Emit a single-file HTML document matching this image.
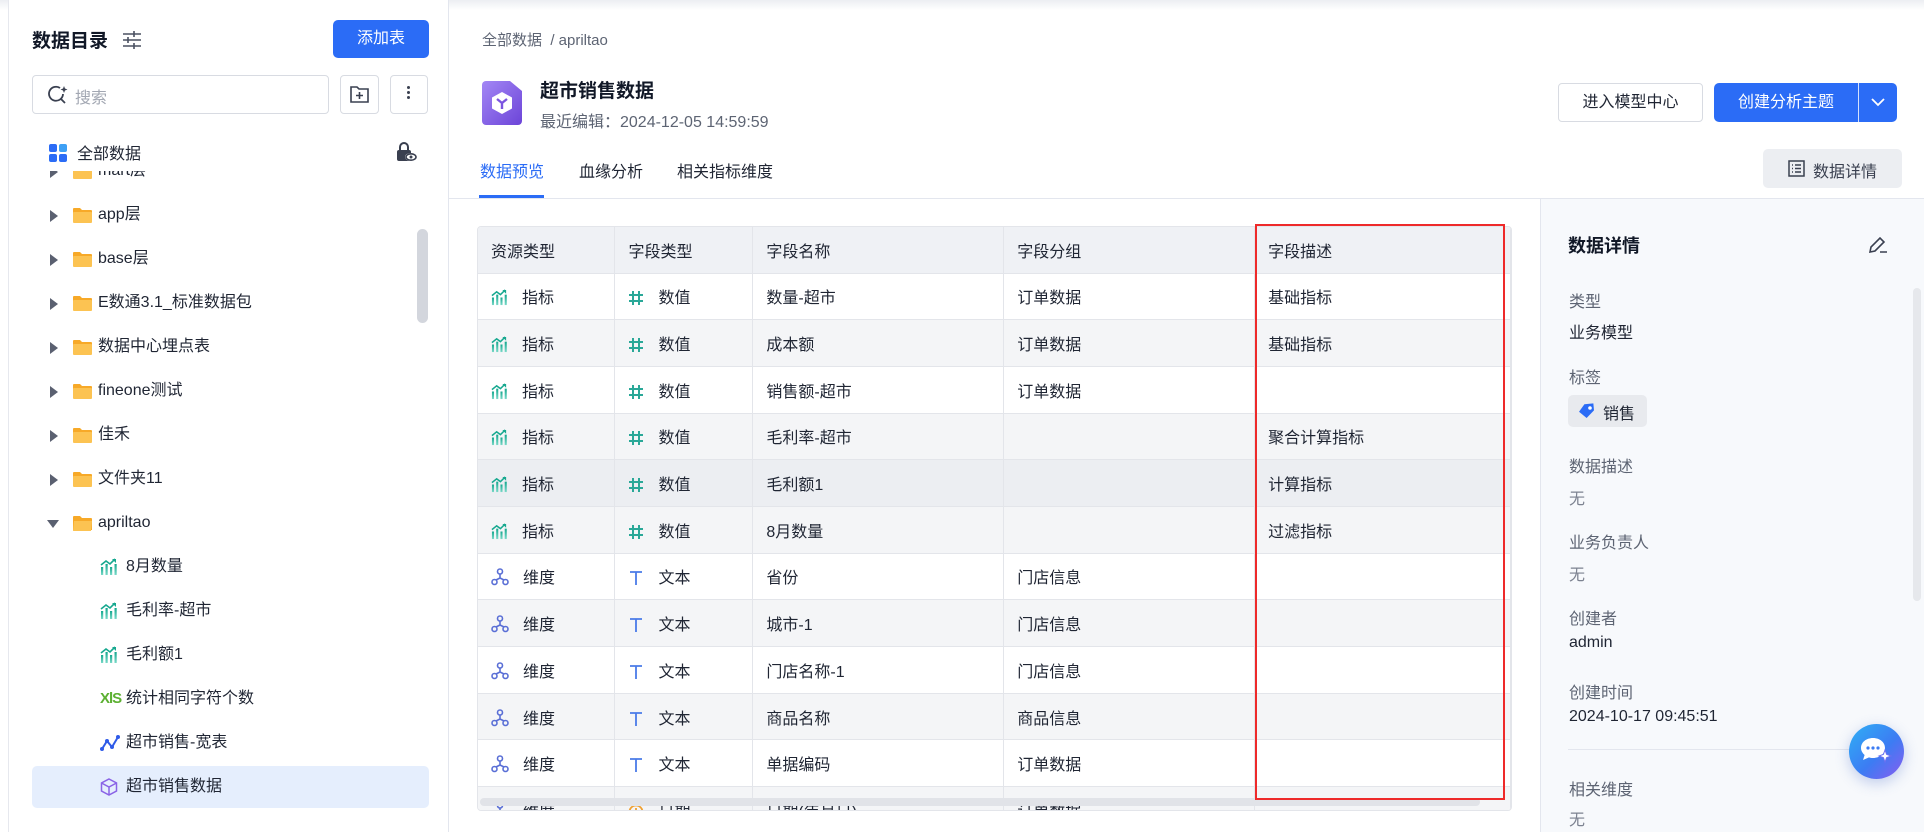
<!DOCTYPE html>
<html><head><meta charset="utf-8">
<style>
*{box-sizing:border-box;margin:0;padding:0}
body{width:1924px;height:832px;overflow:hidden;background:#fff;font-family:"Liberation Sans","Noto Sans CJK SC",sans-serif;color:#1f2533;font-size:16px;position:relative}
.a{position:absolute;white-space:nowrap}
.topsh{position:absolute;left:0;top:0;width:1924px;height:10px;background:linear-gradient(#eceef2,#fff)}
.side{position:absolute;left:8px;top:0;width:441px;height:832px;border-left:1px solid #e6e8ee;border-right:1px solid #e3e6ee;background:#fff}
.btn{position:absolute;border:1px solid #d8dbe2;border-radius:4px;background:#fff}
.row{position:absolute;left:0;width:440px;height:44px;line-height:44px}
.tri{position:absolute;left:41px;top:17px;width:0;height:0;border-top:6px solid transparent;border-bottom:6px solid transparent;border-left:8px solid #5a6070}
.tri.d{left:38px;top:19px;border-left:6px solid transparent;border-right:6px solid transparent;border-top:8px solid #5a6070;border-bottom:0}
.fold{position:absolute;left:64px;top:14px;width:19px;height:16px}
.tx{position:absolute;left:89px;top:0;font-size:16px;color:#1f2533}
.ci{position:absolute;left:91px;top:13px}
.ct{position:absolute;left:117px;font-size:16px}
table{border-collapse:collapse;position:absolute;left:478px;top:227px;width:1033px}
td{height:46.7px;border-right:1px solid #e3e5ea;border-bottom:1px solid #e3e5ea;font-size:16px;padding-left:13px;white-space:nowrap;overflow:hidden}
tr.h td{background:#eff1f5;height:46px}
tr.g td{background:#f4f5f7}
tr.hv td{background:#eceef2}
td svg{vertical-align:-3px;margin-right:14px}
.lab{position:absolute;left:1569px;font-size:16px;color:#5d6473}
.val{position:absolute;left:1569px;font-size:16px;color:#1f2533}
</style></head><body>
<div class="topsh"></div>
<div class="side">
  <div class="a" style="left:23px;top:26px;font-size:19px;font-weight:bold;color:#111827">数据目录</div>
  <svg class="a" style="left:113px;top:30px" width="20" height="20" viewBox="0 0 20 20" fill="none" stroke="#4a5060" stroke-width="1.6"><path d="M1 4h18M1 10h18M1 16h18"/><path d="M12 1v6M6 7v6M12 13v6"/></svg>
  <div class="a" style="left:324px;top:20px;width:96px;height:38px;background:#2b6cf6;border-radius:5px;color:#fff;font-size:16px;line-height:38px;text-align:center">添加表</div>
  <div class="btn" style="left:23px;top:75px;width:297px;height:39px"></div>
  <svg class="a" style="left:39px;top:85px" width="21" height="20" viewBox="0 0 21 20" fill="none" stroke="#3a4050" stroke-width="1.8"><path d="M15 9a7 7 0 1 1-3-6"/><path d="M13 14l4 4"/><path d="M16 1l1 2.5 2.5 1-2.5 1-1 2.5-1-2.5-2.5-1 2.5-1z" fill="#3a4050" stroke="none"/></svg>
  <div class="a" style="left:66px;top:84px;color:#a2a7b2;font-size:16px">搜索</div>
  <div class="btn" style="left:331px;top:75px;width:39px;height:39px"></div>
  <svg class="a" style="left:341px;top:85px" width="19" height="18" viewBox="0 0 19 18" fill="none" stroke="#3a4050" stroke-width="1.6"><path d="M1 2h6l2 2h9v13H1z"/><path d="M9.5 7v7M6 10.5h7"/></svg>
  <div class="btn" style="left:381px;top:75px;width:38px;height:39px"></div>
  <div class="a" style="left:398px;top:86px;width:3px;height:3px;background:#3a4050;border-radius:2px;box-shadow:0 5px 0 #3a4050,0 10px 0 #3a4050"></div>
  <div class="a" style="left:40px;top:144px;width:8px;height:8px;background:#2b6cf6;border-radius:2px;box-shadow:10px 0 0 #3ea0f5,0 10px 0 #2b6cf6,10px 10px 0 #2b6cf6"></div>
  <div class="a" style="left:68px;top:140px;font-size:16px">全部数据</div>
  <svg class="a" style="left:387px;top:142px" width="22" height="20" viewBox="0 0 22 20"><path d="M4 8V5a4 4 0 0 1 8 0v3" fill="none" stroke="#3a4050" stroke-width="2"/><rect x="1" y="8" width="14" height="11" rx="2" fill="#3a4050"/><ellipse cx="15" cy="15" rx="6" ry="4" fill="#fff"/><ellipse cx="15" cy="15" rx="5" ry="3.2" fill="none" stroke="#3a4050" stroke-width="1.6"/><circle cx="15" cy="15" r="1.5" fill="#3a4050"/></svg>
  <div style="position:absolute;left:0;top:171px;width:440px;height:641px;overflow:hidden">
    <div class="row" style="top:-22px"><div class="tri"></div><svg class="fold" viewBox="0 0 19 16"><path d="M0 2a1 1 0 0 1 1-1h6l2 2h9a1 1 0 0 1 1 1v11H0z" fill="#f7a928"/><rect x="0" y="5" width="19" height="11" rx="1" fill="#fcc352"/></svg><div class="tx">mart层</div></div>
    <div class="row" style="top:22px"><div class="tri"></div><svg class="fold" viewBox="0 0 19 16"><path d="M0 2a1 1 0 0 1 1-1h6l2 2h9a1 1 0 0 1 1 1v11H0z" fill="#f7a928"/><rect x="0" y="5" width="19" height="11" rx="1" fill="#fcc352"/></svg><div class="tx">app层</div></div>
    <div class="row" style="top:66px"><div class="tri"></div><svg class="fold" viewBox="0 0 19 16"><path d="M0 2a1 1 0 0 1 1-1h6l2 2h9a1 1 0 0 1 1 1v11H0z" fill="#f7a928"/><rect x="0" y="5" width="19" height="11" rx="1" fill="#fcc352"/></svg><div class="tx">base层</div></div>
    <div class="row" style="top:110px"><div class="tri"></div><svg class="fold" viewBox="0 0 19 16"><path d="M0 2a1 1 0 0 1 1-1h6l2 2h9a1 1 0 0 1 1 1v11H0z" fill="#f7a928"/><rect x="0" y="5" width="19" height="11" rx="1" fill="#fcc352"/></svg><div class="tx">E数通3.1_标准数据包</div></div>
    <div class="row" style="top:154px"><div class="tri"></div><svg class="fold" viewBox="0 0 19 16"><path d="M0 2a1 1 0 0 1 1-1h6l2 2h9a1 1 0 0 1 1 1v11H0z" fill="#f7a928"/><rect x="0" y="5" width="19" height="11" rx="1" fill="#fcc352"/></svg><div class="tx">数据中心埋点表</div></div>
    <div class="row" style="top:198px"><div class="tri"></div><svg class="fold" viewBox="0 0 19 16"><path d="M0 2a1 1 0 0 1 1-1h6l2 2h9a1 1 0 0 1 1 1v11H0z" fill="#f7a928"/><rect x="0" y="5" width="19" height="11" rx="1" fill="#fcc352"/></svg><div class="tx">fineone测试</div></div>
    <div class="row" style="top:242px"><div class="tri"></div><svg class="fold" viewBox="0 0 19 16"><path d="M0 2a1 1 0 0 1 1-1h6l2 2h9a1 1 0 0 1 1 1v11H0z" fill="#f7a928"/><rect x="0" y="5" width="19" height="11" rx="1" fill="#fcc352"/></svg><div class="tx">佳禾</div></div>
    <div class="row" style="top:286px"><div class="tri"></div><svg class="fold" viewBox="0 0 19 16"><path d="M0 2a1 1 0 0 1 1-1h6l2 2h9a1 1 0 0 1 1 1v11H0z" fill="#f7a928"/><rect x="0" y="5" width="19" height="11" rx="1" fill="#fcc352"/></svg><div class="tx">文件夹11</div></div>
    <div class="row" style="top:330px"><div class="tri d"></div><svg class="fold" viewBox="0 0 19 16"><path d="M0 2a1 1 0 0 1 1-1h6l2 2h9a1 1 0 0 1 1 1v11H0z" fill="#f7a928"/><path d="M1 6h18l-1 10H0z" fill="#fcc352"/></svg><div class="tx">apriltao</div></div>
    <div class="row" style="top:374px"><svg class="ci" width="18" height="18" viewBox="0 0 18 18"><defs><linearGradient id="tg" x1="0" y1="1" x2="0" y2="0"><stop offset="0" stop-color="#7ad9c8"/><stop offset="1" stop-color="#16a88f"/></linearGradient></defs><g fill="url(#tg)"><rect x="1" y="9" width="2.2" height="8"/><rect x="5.5" y="6" width="2.2" height="11"/><rect x="10" y="9" width="2.2" height="8"/><rect x="14.5" y="6" width="2.2" height="11"/></g><path d="M1 7l5-4 4 3 5-5" fill="none" stroke="#16a88f" stroke-width="1.6"/><path d="M12 1h4v4z" fill="#16a88f"/></svg><div class="ct">8月数量</div></div>
    <div class="row" style="top:418px"><svg class="ci" width="18" height="18" viewBox="0 0 18 18"><g fill="url(#tg)"><rect x="1" y="9" width="2.2" height="8"/><rect x="5.5" y="6" width="2.2" height="11"/><rect x="10" y="9" width="2.2" height="8"/><rect x="14.5" y="6" width="2.2" height="11"/></g><path d="M1 7l5-4 4 3 5-5" fill="none" stroke="#16a88f" stroke-width="1.6"/><path d="M12 1h4v4z" fill="#16a88f"/></svg><div class="ct">毛利率-超市</div></div>
    <div class="row" style="top:462px"><svg class="ci" width="18" height="18" viewBox="0 0 18 18"><g fill="url(#tg)"><rect x="1" y="9" width="2.2" height="8"/><rect x="5.5" y="6" width="2.2" height="11"/><rect x="10" y="9" width="2.2" height="8"/><rect x="14.5" y="6" width="2.2" height="11"/></g><path d="M1 7l5-4 4 3 5-5" fill="none" stroke="#16a88f" stroke-width="1.6"/><path d="M12 1h4v4z" fill="#16a88f"/></svg><div class="ct">毛利额1</div></div>
    <div class="row" style="top:506px"><div class="a" style="left:91px;top:0;font-size:15px;font-weight:bold;color:#5cb031;letter-spacing:-1px">XlS</div><div class="ct">统计相同字符个数</div></div>
    <div class="row" style="top:550px"><svg class="ci" width="20" height="18" viewBox="0 0 20 18"><path d="M2 15l5-8 5 6 6-10" fill="none" stroke="#2f5be8" stroke-width="2"/><circle cx="2" cy="15" r="2" fill="#2f5be8"/><circle cx="7" cy="7" r="2" fill="#2f5be8"/><circle cx="12" cy="13" r="2" fill="#2f5be8"/><circle cx="18" cy="3" r="2" fill="#2f5be8"/></svg><div class="ct">超市销售-宽表</div></div>
    <div class="row" style="top:595px;left:23px;width:397px;height:42px;background:#e5eefd;border-radius:5px"></div>
    <div class="row" style="top:594px"><svg class="ci" width="18" height="18" viewBox="0 0 18 18" fill="none" stroke="#8a63e6" stroke-width="1.5"><path d="M9 1l7.5 4v8L9 17l-7.5-4V5z"/><path d="M1.5 5L9 9l7.5-4M9 9v8"/></svg><div class="ct">超市销售数据</div></div>
  </div>
  <div class="a" style="left:408px;top:229px;width:11px;height:94px;background:#d3d6dd;border-radius:6px"></div>
</div>

<!-- main header -->
<div class="a" style="left:482px;top:29px;font-size:15px;color:#5d6473">全部数据 &nbsp;/ apriltao</div>
<svg class="a" style="left:482px;top:81px" width="40" height="44" viewBox="0 0 40 44"><defs><linearGradient id="pg" x1="0" y1="0" x2="1" y2="1"><stop offset="0" stop-color="#a387f5"/><stop offset="1" stop-color="#6c44d8"/></linearGradient></defs><path d="M4 0h24l12 10v30a4 4 0 0 1-4 4H4a4 4 0 0 1-4-4V4a4 4 0 0 1 4-4z" fill="url(#pg)"/><path d="M20 11l10 5.5v11L20 33l-10-5.5v-11z" fill="#fff"/><path d="M15 18l5 4 5-4M20 22v6" fill="none" stroke="#7b55e0" stroke-width="2.4"/></svg>
<div class="a" style="left:540px;top:76px;font-size:19px;font-weight:bold;color:#111827">超市销售数据</div>
<div class="a" style="left:540px;top:108px;font-size:16px;color:#5d6473">最近编辑：2024-12-05 14:59:59</div>
<div class="a" style="left:480px;top:158px;font-size:16px;color:#2b6cf6">数据预览</div>
<div class="a" style="left:479px;top:195px;width:65px;height:3px;background:#2b6cf6"></div>
<div class="a" style="left:579px;top:158px;font-size:16px">血缘分析</div>
<div class="a" style="left:677px;top:158px;font-size:16px">相关指标维度</div>
<div class="a" style="left:449px;top:198px;width:1475px;height:1px;background:#e3e6ee"></div>
<div class="btn" style="left:1558px;top:83px;width:145px;height:39px;line-height:37px;text-align:center;font-size:16px">进入模型中心</div>
<div class="a" style="left:1714px;top:83px;width:183px;height:39px;background:#2b6cf6;border-radius:5px"></div>
<div class="a" style="left:1714px;top:83px;width:144px;height:39px;line-height:39px;text-align:center;color:#fff;font-size:16px">创建分析主题</div>
<div class="a" style="left:1858px;top:83px;width:1px;height:39px;background:#fff;opacity:.8"></div>
<svg class="a" style="left:1870px;top:96px" width="16" height="12" viewBox="0 0 16 12"><path d="M2 3l6 6 6-6" fill="none" stroke="#fff" stroke-width="1.8"/></svg>
<div class="a" style="left:1763px;top:149px;width:139px;height:39px;background:#eceef2;border-radius:5px"></div>
<svg class="a" style="left:1788px;top:160px" width="17" height="17" viewBox="0 0 17 17" fill="none" stroke="#3a4050" stroke-width="1.5"><rect x="1" y="1" width="15" height="15"/><path d="M4 5h1M7 5h6M4 8.5h1M7 8.5h6M4 12h1M7 12h6"/></svg>
<div class="a" style="left:1813px;top:158px;font-size:16px;color:#3a4050">数据详情</div>

<!-- table -->
<div class="a" style="left:477px;top:226px;width:1035px;height:585px;border:1px solid #e3e5ea;border-radius:4px;overflow:hidden">
<table style="left:0;top:0">
<colgroup><col style="width:137px"><col style="width:138px"><col style="width:251px"><col style="width:251px"><col style="width:256px"></colgroup>
<tr class="h"><td>资源类型</td><td>字段类型</td><td>字段名称</td><td>字段分组</td><td>字段描述</td></tr>
<tr><td><svg width="17" height="17" viewBox="0 0 18 18"><g fill="url(#tg)"><rect x="1" y="9" width="2.2" height="8"/><rect x="5.5" y="6" width="2.2" height="11"/><rect x="10" y="9" width="2.2" height="8"/><rect x="14.5" y="6" width="2.2" height="11"/></g><path d="M1 7l5-4 4 3 5-5" fill="none" stroke="#16a88f" stroke-width="1.6"/><path d="M12 1h4v4z" fill="#16a88f"/></svg>指标</td><td><svg width="16" height="16" viewBox="0 0 16 16" stroke="#2aa898" stroke-width="2"><path d="M5 1v14M11 1v14M1 5h14M1 11h14"/></svg>数值</td><td>数量-超市</td><td>订单数据</td><td>基础指标</td></tr>
<tr class="g"><td><svg width="17" height="17" viewBox="0 0 18 18"><g fill="url(#tg)"><rect x="1" y="9" width="2.2" height="8"/><rect x="5.5" y="6" width="2.2" height="11"/><rect x="10" y="9" width="2.2" height="8"/><rect x="14.5" y="6" width="2.2" height="11"/></g><path d="M1 7l5-4 4 3 5-5" fill="none" stroke="#16a88f" stroke-width="1.6"/><path d="M12 1h4v4z" fill="#16a88f"/></svg>指标</td><td><svg width="16" height="16" viewBox="0 0 16 16" stroke="#2aa898" stroke-width="2"><path d="M5 1v14M11 1v14M1 5h14M1 11h14"/></svg>数值</td><td>成本额</td><td>订单数据</td><td>基础指标</td></tr>
<tr><td><svg width="17" height="17" viewBox="0 0 18 18"><g fill="url(#tg)"><rect x="1" y="9" width="2.2" height="8"/><rect x="5.5" y="6" width="2.2" height="11"/><rect x="10" y="9" width="2.2" height="8"/><rect x="14.5" y="6" width="2.2" height="11"/></g><path d="M1 7l5-4 4 3 5-5" fill="none" stroke="#16a88f" stroke-width="1.6"/><path d="M12 1h4v4z" fill="#16a88f"/></svg>指标</td><td><svg width="16" height="16" viewBox="0 0 16 16" stroke="#2aa898" stroke-width="2"><path d="M5 1v14M11 1v14M1 5h14M1 11h14"/></svg>数值</td><td>销售额-超市</td><td>订单数据</td><td></td></tr>
<tr class="g"><td><svg width="17" height="17" viewBox="0 0 18 18"><g fill="url(#tg)"><rect x="1" y="9" width="2.2" height="8"/><rect x="5.5" y="6" width="2.2" height="11"/><rect x="10" y="9" width="2.2" height="8"/><rect x="14.5" y="6" width="2.2" height="11"/></g><path d="M1 7l5-4 4 3 5-5" fill="none" stroke="#16a88f" stroke-width="1.6"/><path d="M12 1h4v4z" fill="#16a88f"/></svg>指标</td><td><svg width="16" height="16" viewBox="0 0 16 16" stroke="#2aa898" stroke-width="2"><path d="M5 1v14M11 1v14M1 5h14M1 11h14"/></svg>数值</td><td>毛利率-超市</td><td></td><td>聚合计算指标</td></tr>
<tr class="hv"><td><svg width="17" height="17" viewBox="0 0 18 18"><g fill="url(#tg)"><rect x="1" y="9" width="2.2" height="8"/><rect x="5.5" y="6" width="2.2" height="11"/><rect x="10" y="9" width="2.2" height="8"/><rect x="14.5" y="6" width="2.2" height="11"/></g><path d="M1 7l5-4 4 3 5-5" fill="none" stroke="#16a88f" stroke-width="1.6"/><path d="M12 1h4v4z" fill="#16a88f"/></svg>指标</td><td><svg width="16" height="16" viewBox="0 0 16 16" stroke="#2aa898" stroke-width="2"><path d="M5 1v14M11 1v14M1 5h14M1 11h14"/></svg>数值</td><td>毛利额1</td><td></td><td>计算指标</td></tr>
<tr class="g"><td><svg width="17" height="17" viewBox="0 0 18 18"><g fill="url(#tg)"><rect x="1" y="9" width="2.2" height="8"/><rect x="5.5" y="6" width="2.2" height="11"/><rect x="10" y="9" width="2.2" height="8"/><rect x="14.5" y="6" width="2.2" height="11"/></g><path d="M1 7l5-4 4 3 5-5" fill="none" stroke="#16a88f" stroke-width="1.6"/><path d="M12 1h4v4z" fill="#16a88f"/></svg>指标</td><td><svg width="16" height="16" viewBox="0 0 16 16" stroke="#2aa898" stroke-width="2"><path d="M5 1v14M11 1v14M1 5h14M1 11h14"/></svg>数值</td><td>8月数量</td><td></td><td>过滤指标</td></tr>
<tr><td><svg width="18" height="18" viewBox="0 0 18 18" fill="none" stroke="#5a6fd6" stroke-width="1.6"><circle cx="9" cy="3.5" r="2.5"/><circle cx="3.5" cy="14" r="2.5"/><circle cx="14.5" cy="14" r="2.5"/><path d="M9 6v4M9 10l-4 2M9 10l4 2"/></svg>维度</td><td><svg width="16" height="16" viewBox="0 0 16 16" stroke="#4a7be8" stroke-width="1.8"><path d="M2 2h12M8 2v13"/></svg>文本</td><td>省份</td><td>门店信息</td><td></td></tr>
<tr class="g"><td><svg width="18" height="18" viewBox="0 0 18 18" fill="none" stroke="#5a6fd6" stroke-width="1.6"><circle cx="9" cy="3.5" r="2.5"/><circle cx="3.5" cy="14" r="2.5"/><circle cx="14.5" cy="14" r="2.5"/><path d="M9 6v4M9 10l-4 2M9 10l4 2"/></svg>维度</td><td><svg width="16" height="16" viewBox="0 0 16 16" stroke="#4a7be8" stroke-width="1.8"><path d="M2 2h12M8 2v13"/></svg>文本</td><td>城市-1</td><td>门店信息</td><td></td></tr>
<tr><td><svg width="18" height="18" viewBox="0 0 18 18" fill="none" stroke="#5a6fd6" stroke-width="1.6"><circle cx="9" cy="3.5" r="2.5"/><circle cx="3.5" cy="14" r="2.5"/><circle cx="14.5" cy="14" r="2.5"/><path d="M9 6v4M9 10l-4 2M9 10l4 2"/></svg>维度</td><td><svg width="16" height="16" viewBox="0 0 16 16" stroke="#4a7be8" stroke-width="1.8"><path d="M2 2h12M8 2v13"/></svg>文本</td><td>门店名称-1</td><td>门店信息</td><td></td></tr>
<tr class="g"><td><svg width="18" height="18" viewBox="0 0 18 18" fill="none" stroke="#5a6fd6" stroke-width="1.6"><circle cx="9" cy="3.5" r="2.5"/><circle cx="3.5" cy="14" r="2.5"/><circle cx="14.5" cy="14" r="2.5"/><path d="M9 6v4M9 10l-4 2M9 10l4 2"/></svg>维度</td><td><svg width="16" height="16" viewBox="0 0 16 16" stroke="#4a7be8" stroke-width="1.8"><path d="M2 2h12M8 2v13"/></svg>文本</td><td>商品名称</td><td>商品信息</td><td></td></tr>
<tr><td><svg width="18" height="18" viewBox="0 0 18 18" fill="none" stroke="#5a6fd6" stroke-width="1.6"><circle cx="9" cy="3.5" r="2.5"/><circle cx="3.5" cy="14" r="2.5"/><circle cx="14.5" cy="14" r="2.5"/><path d="M9 6v4M9 10l-4 2M9 10l4 2"/></svg>维度</td><td><svg width="16" height="16" viewBox="0 0 16 16" stroke="#4a7be8" stroke-width="1.8"><path d="M2 2h12M8 2v13"/></svg>文本</td><td>单据编码</td><td>订单数据</td><td></td></tr>
<tr class="g"><td><svg width="18" height="18" viewBox="0 0 18 18" fill="none" stroke="#5a6fd6" stroke-width="1.6"><circle cx="9" cy="3.5" r="2.5"/><circle cx="3.5" cy="14" r="2.5"/><circle cx="14.5" cy="14" r="2.5"/><path d="M9 6v4M9 10l-4 2M9 10l4 2"/></svg>维度</td><td><svg width="16" height="16" viewBox="0 0 16 16" fill="none" stroke="#f0a030" stroke-width="1.8"><circle cx="8" cy="8" r="6.5"/><path d="M8 4v4h3"/></svg>日期</td><td>日期(年月日)</td><td>订单数据</td><td></td></tr>
</table>
<div class="a" style="left:2px;top:571px;width:1000px;height:8px;background:#e1e3e8;border-radius:4px"></div>
</div>
<div class="a" style="left:1255px;top:224px;width:250px;height:576px;border:2px solid #ee2a2a"></div>

<!-- right panel -->
<div class="a" style="left:1540px;top:199px;width:384px;height:633px;background:#f7f9fc;border-left:1px solid #e3e6ee"></div>
<div class="a" style="left:1913px;top:288px;width:8px;height:313px;background:#e6e8ec;border-radius:4px"></div>
<div class="a" style="left:1568px;top:232px;font-size:18px;font-weight:bold;color:#111827">数据详情</div>
<svg class="a" style="left:1868px;top:236px" width="20" height="18" viewBox="0 0 20 18" fill="none" stroke="#3a4050" stroke-width="1.6"><path d="M2 16l1-5 9-9 4 4-9 9z M12 16h7"/></svg>
<div class="lab" style="top:288px">类型</div>
<div class="val" style="top:319px">业务模型</div>
<div class="lab" style="top:364px">标签</div>
<div class="a" style="left:1568px;top:395px;width:79px;height:32px;background:#e8eaee;border-radius:5px"></div>
<svg class="a" style="left:1578px;top:403px" width="18" height="16" viewBox="0 0 18 16"><path d="M7 1h9v7l-8 7-7-7z" fill="#2b6cf6" transform="rotate(-5 9 8)"/><circle cx="12" cy="5" r="1.8" fill="#fff"/></svg>
<div class="val" style="top:400px;left:1603px">销售</div>
<div class="lab" style="top:453px">数据描述</div>
<div class="lab" style="top:485px;color:#7c8290">无</div>
<div class="lab" style="top:529px">业务负责人</div>
<div class="lab" style="top:561px;color:#7c8290">无</div>
<div class="lab" style="top:605px">创建者</div>
<div class="val" style="top:634px">admin</div>
<div class="lab" style="top:679px">创建时间</div>
<div class="val" style="top:708px">2024-10-17 09:45:51</div>
<div class="a" style="left:1568px;top:749px;width:300px;height:1px;background:#e3e6ee"></div>
<div class="lab" style="top:776px">相关维度</div>
<div class="lab" style="top:806px;color:#7c8290">无</div>
<div class="a" style="left:1849px;top:724px;width:55px;height:55px;border-radius:50%;background:linear-gradient(135deg,#2fb0f5,#3c7cf3 55%,#8a5cf0);box-shadow:0 4px 14px rgba(60,100,200,.3)"></div>
<svg class="a" style="left:1860px;top:736px" width="34" height="30" viewBox="0 0 34 30"><path d="M13 2c7 0 12 4.5 12 10s-5 10-12 10c-1.5 0-3-.2-4-.6L3 24l1.6-5C2.5 17 1 14.7 1 12 1 6.5 6 2 13 2z" fill="#fff"/><circle cx="8" cy="12" r="1.6" fill="#3c7cf3"/><circle cx="13" cy="12" r="1.6" fill="#3c7cf3"/><circle cx="18" cy="12" r="1.6" fill="#3c7cf3"/><path d="M25 14l1.6 4.4L31 20l-4.4 1.6L25 26l-1.6-4.4L19 20l4.4-1.6z" fill="#fff" stroke="#6a70f0" stroke-width="1"/></svg>
</body></html>
